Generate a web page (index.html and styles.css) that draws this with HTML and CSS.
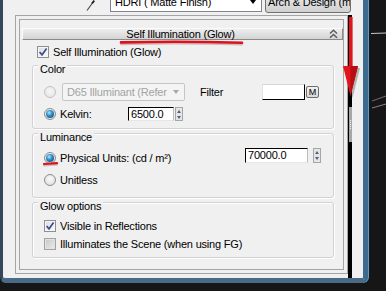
FILE: index.html
```html
<!DOCTYPE html>
<html lang="en">

<head>
    <meta charset="UTF-8">
    <title>Self Illumination (Glow)</title>
    <link rel="stylesheet" href="styles.css">
</head>

<body>
    <div class="window">
        <div class="toolbar">
            <svg class="picker" width="9" height="11" viewBox="0 0 9 11">
                <path d="M1 10.5 L6.5 3" stroke="#4a4a4a" stroke-width="1.2" fill="none" />
                <path d="M6 3.5 L8.3 0.6" stroke="#222" stroke-width="2" fill="none" />
            </svg>
            <div class="mtl-select">
                <span>HDRI ( Matte Finish)</span>
                <i class="drop"></i>
            </div>
            <div class="mtl-type">Arch &amp; Design (mi)</div>
        </div>
        <div class="body">
            <div class="panel">
                <div class="rollout">
                    <div class="rollout-title">
                        <span class="title-text">Self Illumination (Glow)</span>
                        <svg class="collapse" width="9" height="10" viewBox="0 0 9 10">
                            <path d="M1 4.5 L4.5 1.2 L8 4.5 M1 8.8 L4.5 5.5 L8 8.8" stroke="#5c5c5c" stroke-width="1.5" fill="none" />
                        </svg>
                    </div>

                    <div class="check-row main-check">
                        <span class="check">
                            <svg width="10" height="10" viewBox="0 0 10 10"><path d="M1.6 5 L4 7.8 L8.6 1.6" stroke="#3b4f8e" stroke-width="1.7" fill="none" /></svg>
                        </span>
                        <span>Self Illumination (Glow)</span>
                    </div>

                    <div class="group color-group">
                        <div class="group-label">Color</div>
                        <div class="row preset-row">
                            <span class="radio off"></span>
                            <div class="combo">
                                <span>D65 Illuminant (Reference)</span>
                                <i class="drop"></i>
                            </div>
                            <span class="filter-label">Filter</span>
                            <span class="swatch"></span>
                            <span class="map-btn">M</span>
                        </div>
                        <div class="row kelvin-row">
                            <span class="radio on"></span>
                            <span class="kelvin-label">Kelvin:</span>
                            <span class="field kelvin-field">6500.0</span>
                            <span class="spin"><i class="up"></i><i class="down"></i></span>
                        </div>
                    </div>

                    <div class="group lum-group">
                        <div class="group-label">Luminance</div>
                        <div class="row phys-row">
                            <span class="radio on"></span>
                            <span class="phys-label">Physical Units: (cd / m²)</span>
                            <span class="field lum-field">70000.0</span>
                            <span class="spin"><i class="up"></i><i class="down"></i></span>
                        </div>
                        <div class="row unit-row">
                            <span class="radio"></span>
                            <span class="unit-label">Unitless</span>
                        </div>
                    </div>

                    <div class="group glow-group">
                        <div class="group-label">Glow options</div>
                        <div class="check-row refl-row">
                            <span class="check">
                                <svg width="10" height="10" viewBox="0 0 10 10"><path d="M1.6 5 L4 7.8 L8.6 1.6" stroke="#3b4f8e" stroke-width="1.7" fill="none" /></svg>
                            </span>
                            <span>Visible in Reflections</span>
                        </div>
                        <div class="check-row scene-row">
                            <span class="check dim"></span>
                            <span>Illuminates the Scene (when using FG)</span>
                        </div>
                    </div>
                </div>
            </div>
            <div class="scrollbar">
                <div class="thumb"><span class="grip"></span></div>
            </div>
        </div>
    </div>

    <!-- hand-drawn red marks and the viewport behind the window -->
    <svg class="marks" width="386" height="291" viewBox="0 0 386 291">
        <path d="M371 33.5 L386 33" stroke="#c9c9c9" stroke-width="1" />
        <path d="M372 101 L386 96" stroke="#6f6f6f" stroke-width="1" />
        <path d="M372 108 L386 104" stroke="#8e7f86" stroke-width="1" />
        <path d="M121 44 Q182 42.6 242 44.4" stroke="rgba(110,20,20,0.25)" stroke-width="2.4" stroke-linecap="round" fill="none" />
        <path d="M121 42.4 Q182 41 242 42.8" stroke="#d9121b" stroke-width="2.6" stroke-linecap="round" fill="none" />
        <path d="M44 165.4 L57 164.6" stroke="rgba(110,20,20,0.25)" stroke-width="2" stroke-linecap="round" />
        <path d="M44 164 L57 163.2" stroke="#d9121b" stroke-width="2.2" stroke-linecap="round" />
        <rect x="349" y="17" width="3.6" height="50" fill="#e3131c" />
        <polygon points="345,68 360,68 352.5,98" fill="rgba(0,0,0,0.25)" />
        <polygon points="343,66 358,66 350.5,96" fill="#e2141c" />
        <polygon points="350.5,66 358,66 350.5,96" fill="#b80d14" />
    </svg>
</body>

</html>
```

FILE: styles.css
```css
* {
    padding: 0;
    margin: 0;
    box-sizing: border-box;
}

html,
body {
    width: 386px;
    height: 291px;
    overflow: hidden;
}

body {
    position: relative;
    background: #161616;
    font-family: "Liberation Sans", Arial, sans-serif;
    font-size: 11px;
    letter-spacing: -0.2px;
    line-height: 12px;
    color: #000;
}

.window {
    width: 368px;
    margin-top: -8px;
    background: #f0f0f0;
    border-left: 3px solid #34475c;
    border-right: 5px solid #3b6b8f;
    border-bottom: 5px solid #4b6a88;
    border-radius: 0 0 6px 6px;
    box-shadow: 1px 0 0 #5f9dc6;
}

/* material name row, cut by the top of the shot */
.toolbar {
    display: flex;
    align-items: flex-start;
    height: 20px;
}

.picker {
    margin: 8px 0 0 83px;
}

.mtl-select {
    display: flex;
    align-items: center;
    justify-content: space-between;
    width: 152px;
    height: 20px;
    margin-left: 15px;
    padding: 0 5px 0 4px;
    background: #fff;
    border: 1px solid #7f8590;
}

.drop {
    width: 0;
    height: 0;
    border-left: 3.5px solid transparent;
    border-right: 3.5px solid transparent;
    border-top: 4px solid #000;
}

.mtl-type {
    width: 86px;
    height: 21px;
    margin-left: 3px;
    padding: 0 2px;
    line-height: 19px;
    white-space: nowrap;
    overflow: hidden;
    background: linear-gradient(#f4f4f4, #dedede 50%, #d0d0d0);
    border: 1px solid #707070;
    border-radius: 3px;
}

.body {
    display: flex;
    height: 263px;
    margin-top: 3px;
}

.panel {
    width: 333px;
    height: 259px;
    margin-left: 12px;
    padding: 3px;
    border: 1px solid #a4a4a4;
}

.scrollbar {
    display: flex;
    flex-direction: column;
    width: 4px;
    background: #000;
}

.thumb {
    display: flex;
    align-items: center;
    justify-content: center;
    width: 3px;
    height: 35px;
    margin: 92px 0 0 1px;
    background: #a6a6a6;
}

.grip {
    width: 1px;
    height: 9px;
    background: repeating-linear-gradient(#f2f2f2 0 1px, transparent 1px 2px);
}

.rollout {
    height: 100%;
    border: 1px solid #a4a4a4;
}

.rollout-title {
    display: grid;
    grid-template-columns: 1fr auto 1fr;
    align-items: center;
    height: 12px;
    margin: 8px 0 0 2px;
    padding-right: 4px;
    line-height: 10px;
    background: linear-gradient(#eeeeee, #d4d4d4);
    border: 1px solid;
    border-color: #fbfbfb #8a8a8a #8a8a8a #fbfbfb;
}

.rollout-title::before {
    content: "";
}

.collapse {
    justify-self: end;
}

.check-row {
    display: flex;
    align-items: center;
    gap: 4px;
    height: 12px;
}

.main-check {
    margin: 6px 0 0 17px;
}

.check {
    display: flex;
    align-items: center;
    justify-content: center;
    flex: none;
    width: 12px;
    height: 12px;
    border: 1px solid #8e8f8f;
    background: linear-gradient(135deg, #dcdcdc, #fbfbfb);
    box-shadow: inset 0 0 0 1px #f6f6f6;
}

.check.dim {
    border-color: #a2a2a2;
    background: linear-gradient(135deg, #c6c6c6, #ededed);
    box-shadow: inset 0 0 0 1px #e2e2e2;
}

.radio {
    display: flex;
    align-items: center;
    justify-content: center;
    flex: none;
    width: 12px;
    height: 12px;
    border-radius: 50%;
    border: 1px solid #8d8d8d;
    background: radial-gradient(circle at 50% 40%, #fbfbfb, #d8d8d8);
}

.radio.off {
    border-color: #c2c2c2;
    background: radial-gradient(circle at 50% 40%, #f6f6f6, #e2e2e2);
}

.radio.on::after {
    content: "";
    width: 8px;
    height: 8px;
    border-radius: 50%;
    background: radial-gradient(circle at 40% 35%, #b8ecff 0, #3b9ad4 35%, #0d4d7e 85%);
}

/* group boxes */
.group {
    display: flex;
    flex-direction: column;
    margin: 4px 9px 0 12px;
    border: 1px solid #d2d2d2;
    border-radius: 3px;
    box-shadow: inset 1px 1px 0 #fff, 1px 1px 0 #fff;
}

.group-label {
    align-self: flex-start;
    height: 12px;
    margin: -3px 0 0 5px;
    padding: 0 2px;
    background: #f0f0f0;
}

.row {
    display: flex;
    align-items: center;
    padding-left: 11px;
}

.color-group {
    margin-top: 7px;
    padding-bottom: 7px;
}

.preset-row {
    height: 18px;
    margin-top: 8px;
}

.combo {
    display: flex;
    align-items: center;
    width: 123px;
    height: 18px;
    margin-left: 6px;
    padding-left: 4px;
    color: #a3a3a3;
    background: #f4f4f4;
    border: 1px solid #c5c5c5;
    border-radius: 2px;
}

.combo span {
    flex: none;
    width: 100px;
    overflow: hidden;
    white-space: nowrap;
}

.combo .drop {
    margin-left: 6px;
    border-top-color: #a8a8a8;
}

.filter-label {
    width: 62px;
    margin-left: 15px;
}

.swatch {
    width: 43px;
    height: 16px;
    background: #fff;
    border: 1px solid;
    border-color: #d6d6d6 #000 #000 #e2e2e2;
}

.map-btn {
    width: 13px;
    height: 12px;
    margin-left: 1px;
    font-size: 9px;
    line-height: 10px;
    letter-spacing: 0;
    text-align: center;
    background: linear-gradient(#f2f2f2, #d6d6d6);
    border: 1px solid #6e6e6e;
    border-radius: 2px;
}

.kelvin-row {
    height: 14px;
    margin-top: 6px;
}

.kelvin-label {
    width: 68px;
    margin-left: 4px;
}

.field {
    height: 14px;
    padding-left: 2px;
    background: #fff;
    border: 1px solid;
    border-color: #000 #bcbcbc #e6e6e6 #000;
}

.kelvin-field {
    width: 46px;
}

.spin {
    display: flex;
    flex-direction: column;
    width: 8px;
    height: 14px;
    margin-left: 1px;
    background: #e6e6e6;
    border: 1px solid #a6a6a6;
}

.spin i {
    display: flex;
    flex: 1;
    align-items: center;
    justify-content: center;
}

.spin i::before {
    content: "";
    border-left: 2.5px solid transparent;
    border-right: 2.5px solid transparent;
}

.spin .up::before {
    border-bottom: 3px solid #50627f;
}

.spin .down::before {
    border-top: 3px solid #50627f;
}

.lum-group {
    padding-bottom: 11px;
}

.phys-row {
    align-items: flex-start;
    height: 16px;
    margin-top: 5px;
}

.phys-row .radio {
    margin-top: 4px;
}

.phys-label {
    width: 185px;
    margin: 4px 0 0 4px;
}

.lum-field {
    width: 63px;
    height: 15px;
    line-height: 13px;
}

.phys-row .spin {
    height: 15px;
    margin-left: 5px;
}

.unit-row {
    height: 12px;
    margin-top: 10px;
}

.unit-label {
    margin-left: 4px;
}

.glow-group {
    padding-bottom: 7px;
}

.glow-group .check-row {
    padding-left: 11px;
}

.refl-row {
    margin-top: 8px;
}

.scene-row {
    margin-top: 6px;
}

.marks {
    position: absolute;
    top: 0;
    left: 0;
    pointer-events: none;
}
```
